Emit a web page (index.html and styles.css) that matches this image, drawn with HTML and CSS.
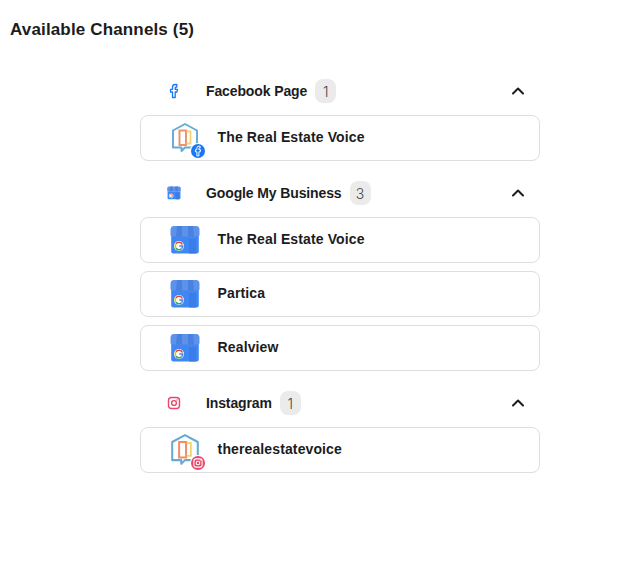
FILE: index.html
```html
<!DOCTYPE html>
<html>

<head>
  <title>Available Channels</title>
  <link rel="stylesheet" href="styles.css">
</head>

<body>
  <svg class="defs" width="0" height="0">
    <symbol id="house" viewBox="0 0 30 30">
      <path d="M15 1 L27 7.500 V24.500 H15 L11.500 28 V24.500 H3 V7.500 Z" fill="none" stroke="#62abd6" stroke-width="1.900" stroke-linejoin="round" />
      <rect x="9.500" y="7.500" width="6.500" height="14.500" fill="#fff" stroke="#ee8d68" stroke-width="1.900" />
      <path d="M16.500 8.500 H20.500 V20.500 H16.500" fill="none" stroke="#f2d675" stroke-width="1.800" />
    </symbol>
    <symbol id="store" viewBox="0 0 30 30">
      <path d="M1.200 11 H28.800 V26.500 Q28.800 28.500 26.800 28.500 H3.200 Q1.200 28.500 1.200 26.500 Z" fill="#3f87f2" />
      <rect x="19" y="14" width="7" height="14.500" fill="#3a7ce8" />
      <path d="M4 1 H26 Q29.500 1 29.500 5 V10 Q29.500 11.500 27.500 11.500 H2.500 Q0.500 11.500 0.500 10 V5 Q0.500 1 4 1 Z" fill="#5c92ea" />
      <path d="M7 1 H12 V11.500 H6 Z M18 1 H23 L24 11.500 H18 Z" fill="#4a80e0" />
      <circle cx="9" cy="21" r="5" fill="#fff" />
      <path d="M12.400 19.500 A3.700 3.700 0 0 0 6 18.800" fill="none" stroke="#ea4335" stroke-width="1.500" />
      <path d="M6 18.800 A3.700 3.700 0 0 0 6 23.200" fill="none" stroke="#fbbc05" stroke-width="1.500" />
      <path d="M6 23.200 A3.700 3.700 0 0 0 11.500 23.700" fill="none" stroke="#34a853" stroke-width="1.500" />
      <path d="M9.200 21 H12.700 A3.700 3.700 0 0 1 11.500 23.700" fill="none" stroke="#4285f4" stroke-width="1.500" />
    </symbol>
    <symbol id="fb" viewBox="0 0 16 16">
      <path d="M10.800 1.500 H9.300 A2.800 2.800 0 0 0 6.500 4.300 V6.300 H4.500 V9 H6.500 V14.500 H9.200 V9 H11 L11.500 6.300 H9.200 V4.700 Q9.200 4.100 9.800 4.100 H10.800 Z" fill="none" stroke="currentColor" stroke-width="1.300" stroke-linejoin="round" />
    </symbol>
    <symbol id="ig" viewBox="0 0 16 16">
      <rect x="2.500" y="2.500" width="11" height="11" rx="3" fill="none" stroke="currentColor" stroke-width="1.400" />
      <circle cx="8" cy="8" r="2.400" fill="none" stroke="currentColor" stroke-width="1.400" />
      <circle cx="11" cy="5" r="0.700" fill="currentColor" />
    </symbol>
    <symbol id="chevron" viewBox="0 0 14 14">
      <path d="M2 9.500 L7 4.500 L12 9.500" fill="none" stroke="currentColor" stroke-width="2" stroke-linecap="round" stroke-linejoin="round" />
    </symbol>
  </svg>

  <h2 class="page-title">Available Channels (5)</h2>

  <div class="channels">
    <section class="group">
      <div class="group-head">
        <span class="group-icon fb-color"><svg width="16" height="16"><use href="#fb" /></svg></span>
        <span class="group-name">Facebook Page</span>
        <span class="count">1</span>
        <svg class="chevron" width="14" height="14"><use href="#chevron" /></svg>
      </div>
      <div class="row">
        <span class="avatar">
          <svg width="30" height="30"><use href="#house" /></svg>
          <span class="mini mini-fb"><svg width="12" height="12"><use href="#fb" /></svg></span>
        </span>
        <span class="row-name">The Real Estate Voice</span>
      </div>
    </section>

    <section class="group">
      <div class="group-head">
        <span class="group-icon"><svg width="14" height="14"><use href="#store" /></svg></span>
        <span class="group-name">Google My Business</span>
        <span class="count">3</span>
        <svg class="chevron" width="14" height="14"><use href="#chevron" /></svg>
      </div>
      <div class="row">
        <span class="avatar"><svg width="30" height="30"><use href="#store" /></svg></span>
        <span class="row-name">The Real Estate Voice</span>
      </div>
      <div class="row">
        <span class="avatar"><svg width="30" height="30"><use href="#store" /></svg></span>
        <span class="row-name">Partica</span>
      </div>
      <div class="row">
        <span class="avatar"><svg width="30" height="30"><use href="#store" /></svg></span>
        <span class="row-name">Realview</span>
      </div>
    </section>

    <section class="group">
      <div class="group-head">
        <span class="group-icon ig-color"><svg width="16" height="16"><use href="#ig" /></svg></span>
        <span class="group-name">Instagram</span>
        <span class="count">1</span>
        <svg class="chevron" width="14" height="14"><use href="#chevron" /></svg>
      </div>
      <div class="row">
        <span class="avatar avatar-lg">
          <svg width="32" height="32"><use href="#house" /></svg>
          <span class="mini mini-ig"><svg width="12" height="12"><use href="#ig" /></svg></span>
        </span>
        <span class="row-name">therealestatevoice</span>
      </div>
    </section>
  </div>
</body>

</html>
```

FILE: styles.css
```css
body {
  margin: 0;
  background-color: white;
  color: #1c1c1e;
  font-family: "Liberation Sans", Arial, sans-serif;
}

.defs {
  display: block;
  height: 0;
}

.page-title {
  margin: 0;
  padding: 21px 0 0 10px;
  height: 47px;
  box-sizing: border-box;
  font-size: 17px;
  line-height: 18px;
  font-weight: bold;
  letter-spacing: 0.15px;
}

.channels {
  width: 400px;
  margin: 20px 0 0 140px;
  display: flex;
  flex-direction: column;
  gap: 8px;
}

.group {
  display: flex;
  flex-direction: column;
  gap: 8px;
}

.group-head {
  height: 48px;
  margin-bottom: -8px;
  display: flex;
  align-items: center;
  padding: 0 15px 0 26px;
}

.group-icon {
  width: 16px;
  height: 16px;
  margin-right: 24px;
  display: flex;
  align-items: center;
  justify-content: center;
}

.fb-color {
  color: #1877f2;
}

.ig-color {
  color: #e8486c;
}

.group-name {
  font-size: 14px;
  font-weight: bold;
  letter-spacing: -0.12px;
}

.count {
  margin-left: 8px;
  min-width: 21px;
  height: 24px;
  padding: 0 4px;
  box-sizing: border-box;
  background-color: #ebebeb;
  border-radius: 8px;
  display: flex;
  align-items: center;
  justify-content: center;
  font-family: Inter, sans-serif;
  font-size: 14px;
  font-weight: 300;
  color: #444;
}

.chevron {
  margin-left: auto;
  color: #1c1c1e;
}

.row {
  height: 46px;
  box-sizing: border-box;
  border: 1px solid #dedede;
  border-radius: 8px;
  display: flex;
  align-items: center;
  padding-left: 29px;
}

.avatar {
  position: relative;
  width: 30px;
  height: 30px;
  margin-right: 17.6px;
  display: block;
}

.avatar > svg {
  display: block;
}

.avatar-lg > svg {
  margin: -1px;
}

.mini {
  position: absolute;
  right: -5px;
  bottom: -5px;
  width: 14px;
  height: 14px;
  border-radius: 50%;
  display: flex;
  align-items: center;
  justify-content: center;
  color: white;
  box-shadow: 0 0 0 1px white;
}

.mini-fb {
  background-color: #1877f2;
}

.mini-ig {
  background-color: #e8486c;
}

.row-name {
  padding-bottom: 2px;
  font-size: 14px;
  font-weight: bold;
  letter-spacing: 0.12px;
}
```
